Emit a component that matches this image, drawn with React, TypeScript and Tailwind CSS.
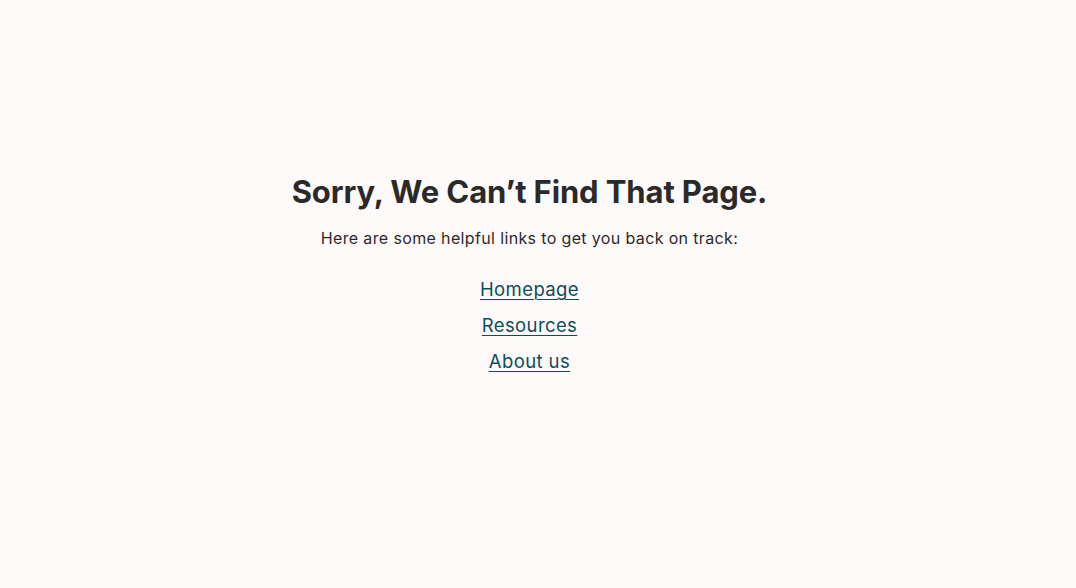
export default function App() {
  return (
    <div className="min-h-[588px] w-full bg-[#fffafa] flex flex-col items-center pr-[17px] pt-[171px] text-[#2b2a2b]" style={{ fontFamily: "Inter, 'Noto Sans', sans-serif" }}>
      <h1 className="text-[31px] leading-[42px] font-bold tracking-[-0.12px]">Sorry, We Can’t Find That Page.</h1>
      <p className="mt-[14px] text-[16px] leading-[22px] tracking-[0.36px]">Here are some helpful links to get you back on track:</p>
      <ul className="mt-[28px] flex flex-col items-center gap-[12px] text-[18.5px] leading-[24px] tracking-[0.4px] text-[#0b4e5c]">
        <li><a href="#" className="underline underline-offset-[3px] decoration-1">Homepage</a></li>
        <li><a href="#" className="underline underline-offset-[3px] decoration-1">Resources</a></li>
        <li><a href="#" className="underline underline-offset-[3px] decoration-1">About us</a></li>
      </ul>
    </div>
  );
}
